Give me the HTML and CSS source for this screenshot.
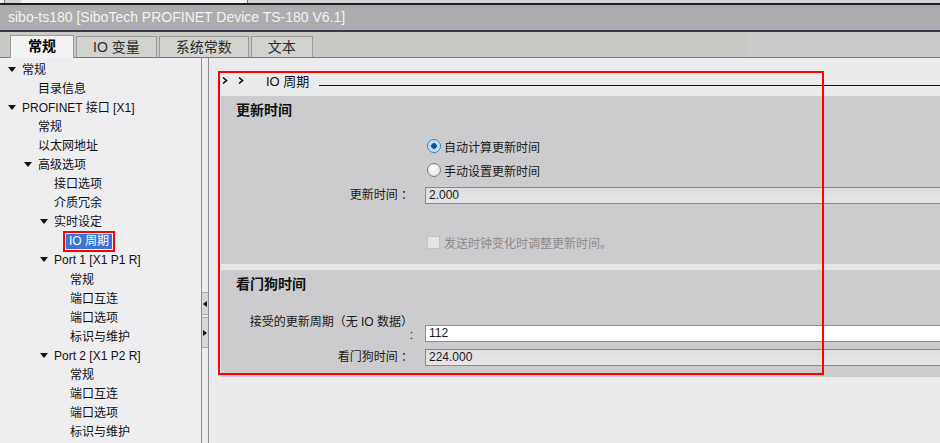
FILE: index.html
```html
<!DOCTYPE html>
<html lang="zh-CN">
<head>
    <meta charset="UTF-8">
    <title>IO 周期</title>
    <link rel="stylesheet" href="styles.css">
</head>
<body>
    <div class="topstrip">
        <span class="ts-box small"></span>
        <span class="ts-box wide"></span>
    </div>
    <div class="titlebar">sibo-ts180 [SiboTech PROFINET Device TS-180 V6.1]</div>

    <div class="tabbar">
        <div class="tab active">常规</div>
        <div class="tab">IO 变量</div>
        <div class="tab">系统常数</div>
        <div class="tab">文本</div>
    </div>

    <div class="main">
        <nav class="tree">
            <div class="row d0"><i class="caret"></i>常规</div>
            <div class="row d1">目录信息</div>
            <div class="row d0"><i class="caret"></i>PROFINET 接口 [X1]</div>
            <div class="row d1">常规</div>
            <div class="row d1">以太网地址</div>
            <div class="row d1"><i class="caret"></i>高级选项</div>
            <div class="row d2">接口选项</div>
            <div class="row d2">介质冗余</div>
            <div class="row d2"><i class="caret"></i>实时设定</div>
            <div class="row d3"><span class="selected">IO 周期</span></div>
            <div class="row d2"><i class="caret"></i>Port 1 [X1 P1 R]</div>
            <div class="row d3">常规</div>
            <div class="row d3">端口互连</div>
            <div class="row d3">端口选项</div>
            <div class="row d3">标识与维护</div>
            <div class="row d2"><i class="caret"></i>Port 2 [X1 P2 R]</div>
            <div class="row d3">常规</div>
            <div class="row d3">端口互连</div>
            <div class="row d3">端口选项</div>
            <div class="row d3">标识与维护</div>
        </nav>

        <div class="splitter">
            <span class="split-btn"><i class="arr left"></i></span>
            <span class="split-btn tall"><i class="arr right"></i></span>
        </div>

        <section class="content">
            <div class="crumb">
                <svg class="chev" width="6" height="7" viewBox="0 0 6 7"><path d="M1 0.5 L4.5 3.5 L1 6.5" fill="none" stroke="#111" stroke-width="1.6"/></svg>
                <svg class="chev" width="6" height="7" viewBox="0 0 6 7"><path d="M1 0.5 L4.5 3.5 L1 6.5" fill="none" stroke="#111" stroke-width="1.6"/></svg>
                <span class="crumb-title">IO 周期</span>
                <span class="crumb-line"></span>
            </div>

            <div class="group first">
                <h2>更新时间</h2>
                <div class="form">
                    <div class="label"></div>
                    <div class="field radio-row"><i class="radio on"></i>自动计算更新时间</div>
                    <div class="label"></div>
                    <div class="field radio-row second"><i class="radio"></i>手动设置更新时间</div>
                    <div class="label gap-input">更新时间 ：</div>
                    <div class="field gap-input"><div class="input ro">2.000</div></div>
                    <div class="label gap-check"></div>
                    <div class="field radio-row gap-check disabled"><i class="check"></i>发送时钟变化时调整更新时间。</div>
                </div>
            </div>

            <div class="group second">
                <h2>看门狗时间</h2>
                <div class="form">
                    <div class="label two-line">接受的更新周期（无 IO 数据）<br>:</div>
                    <div class="field"><div class="input">112</div></div>
                    <div class="label gap-input">看门狗时间 ：</div>
                    <div class="field gap-input"><div class="input ro">224.000</div></div>
                </div>
            </div>
        </section>

        <div class="annot"></div>
    </div>
</body>
</html>
```

FILE: styles.css
```css
* {
    box-sizing: border-box;
}
body {
    margin: 0;
    width: 940px;
    height: 443px;
    overflow: hidden;
    background: #ebeaec;
    font-family: "Liberation Sans", "Noto Sans CJK SC", sans-serif;
    font-size: 12px;
    color: #1a1a1a;
}

/* window chrome */
.topstrip {
    height: 3px;
    background: #d6d6d8;
    display: flex;
    gap: 16px;
}
.ts-box {
    display: block;
    height: 3px;
    background: #f2f2f2;
    border-right: 1px solid #777;
}
.ts-box.small { width: 5px; }
.ts-box.wide { width: 227px; }

.titlebar {
    height: 29px;
    border-top: 2px solid #1e1e22;
    border-bottom: 2px solid #37374a;
    background: #acacae;
    color: #f3f3f3;
    font-size: 14px;
    line-height: 25px;
    padding-left: 8px;
    white-space: nowrap;
}

.tabbar {
    height: 26px;
    display: flex;
    gap: 2px;
    align-items: flex-end;
    padding-left: 10px;
    background: linear-gradient(to right, #c9c9c5 747px, #cbcbcd 747px);
    border-bottom: 1px solid #7a7a7a;
}
.tab {
    height: 21px;
    padding: 0 16px;
    border: 1px solid #9a9a9a;
    border-bottom: none;
    background: #d2d2cf;
    font-size: 14px;
    line-height: 20px;
    color: #2a2a2a;
}
.tab.active {
    height: 23px;
    margin-bottom: -1px;
    background: #f3f3f3;
    font-weight: bold;
    color: #000;
    padding: 0 17px;
}

.main {
    position: relative;
    display: flex;
    height: 385px;
}

/* navigation tree */
.tree {
    width: 201px;
    padding-top: 3px;
    background: #eeedef;
}
.row {
    height: 19.05px;
    line-height: 19px;
    white-space: nowrap;
    color: #111;
}
.row.d0 { padding-left: 22px; }
.row.d1 { padding-left: 38px; }
.row.d2 { padding-left: 54px; }
.row.d3 { padding-left: 70px; }
.caret {
    display: inline-block;
    width: 0;
    height: 0;
    margin-left: -14px;
    margin-right: 6px;
    vertical-align: 2px;
    border-left: 4px solid transparent;
    border-right: 4px solid transparent;
    border-top: 5px solid #111;
}
.selected {
    display: inline-block;
    margin-left: -4px;
    padding: 0 3px;
    line-height: 15px;
    background: #3b74d6;
    color: #fff;
    outline: 2px solid #f00;
    outline-offset: 1px;
}

.splitter {
    width: 8px;
    border-left: 1px solid #8e8e8e;
    border-right: 1px solid #8e8e8e;
    background: #ececee;
    padding-top: 234px;
    display: flex;
    flex-direction: column;
    gap: 2px;
}
.split-btn {
    height: 23px;
    background: #d6d6d8;
    border-top: 1px solid #a8a8a8;
    border-bottom: 1px solid #a8a8a8;
    display: flex;
    align-items: center;
    justify-content: center;
}
.split-btn.tall { height: 31px; }
.arr {
    width: 0;
    height: 0;
    border-top: 3px solid transparent;
    border-bottom: 3px solid transparent;
}
.arr.left { border-right: 4px solid #111; }
.arr.right { border-left: 4px solid #111; }

/* property page */
.content {
    flex: 1;
    margin-left: 12px;
    padding-top: 12px;
    min-width: 0;
}
.crumb {
    height: 20px;
    display: flex;
    align-items: center;
    padding-left: 1px;
}
.chev {
    margin-right: 10px;
}
.crumb-title {
    margin-left: 12px;
    font-size: 13px;
    color: #111;
}
.crumb-line {
    flex: 1;
    height: 1px;
    margin-left: 10px;
    margin-top: 11px;
    background: #111;
}

.group {
    background: #cccbcd;
    padding: 4px 0 13px;
}
.group.first {
    margin-top: 6px;
    height: 168px;
}
.group.second {
    margin-top: 6px;
    padding-bottom: 11px;
    box-shadow: 0 -6px 0 #e5e4e6;
}
.group h2 {
    margin: 0;
    padding-left: 15px;
    font-size: 14px;
    line-height: 20px;
    font-weight: bold;
    color: #111;
}

.form {
    display: grid;
    grid-template-columns: 204px 1fr;
    align-items: end;
}
.group.first .form { margin-top: 16px; }
.group.second .form { margin-top: 22px; }
.label {
    text-align: right;
    padding-right: 12px;
    line-height: 17px;
    color: #1a1a1a;
    white-space: nowrap;
}
.label.two-line {
    line-height: 13px;
}
.gap-input { margin-top: 7px; }
.gap-check { margin-top: 28px; }

.radio-row {
    height: 20px;
    display: flex;
    align-items: center;
    padding-left: 2px;
    color: #1a1a1a;
}
.radio-row.second { margin-top: 4px; }
.radio-row.disabled { color: #8a8a8c; }
.radio {
    width: 14px;
    height: 14px;
    margin-right: 3px;
    border-radius: 50%;
    border: 1px solid #7d7d7f;
    background: radial-gradient(circle at 40% 35%, #fff, #d9d9db);
}
.radio.on {
    border-color: #3e7fb5;
    background: radial-gradient(circle, #1b4f8a 0 2.5px, #9fd0f0 3px, #d6ecfa 6px);
}
.check {
    width: 13px;
    height: 13px;
    margin-right: 4px;
    border: 1px solid #c2c2c4;
    background: #e4e4e6;
}

.input {
    height: 17px;
    border: 1px solid #8a8a8a;
    border-right: none;
    background: #fff;
    padding-left: 3px;
    line-height: 15px;
    color: #1a1a1a;
}
.input.ro {
    background: linear-gradient(#dedde0, #e6e5e7);
}

/* annotation frame drawn over the page */
.annot {
    position: absolute;
    left: 218px;
    top: 13px;
    width: 606px;
    height: 304px;
    border: 2px solid #f00;
    pointer-events: none;
}
```
